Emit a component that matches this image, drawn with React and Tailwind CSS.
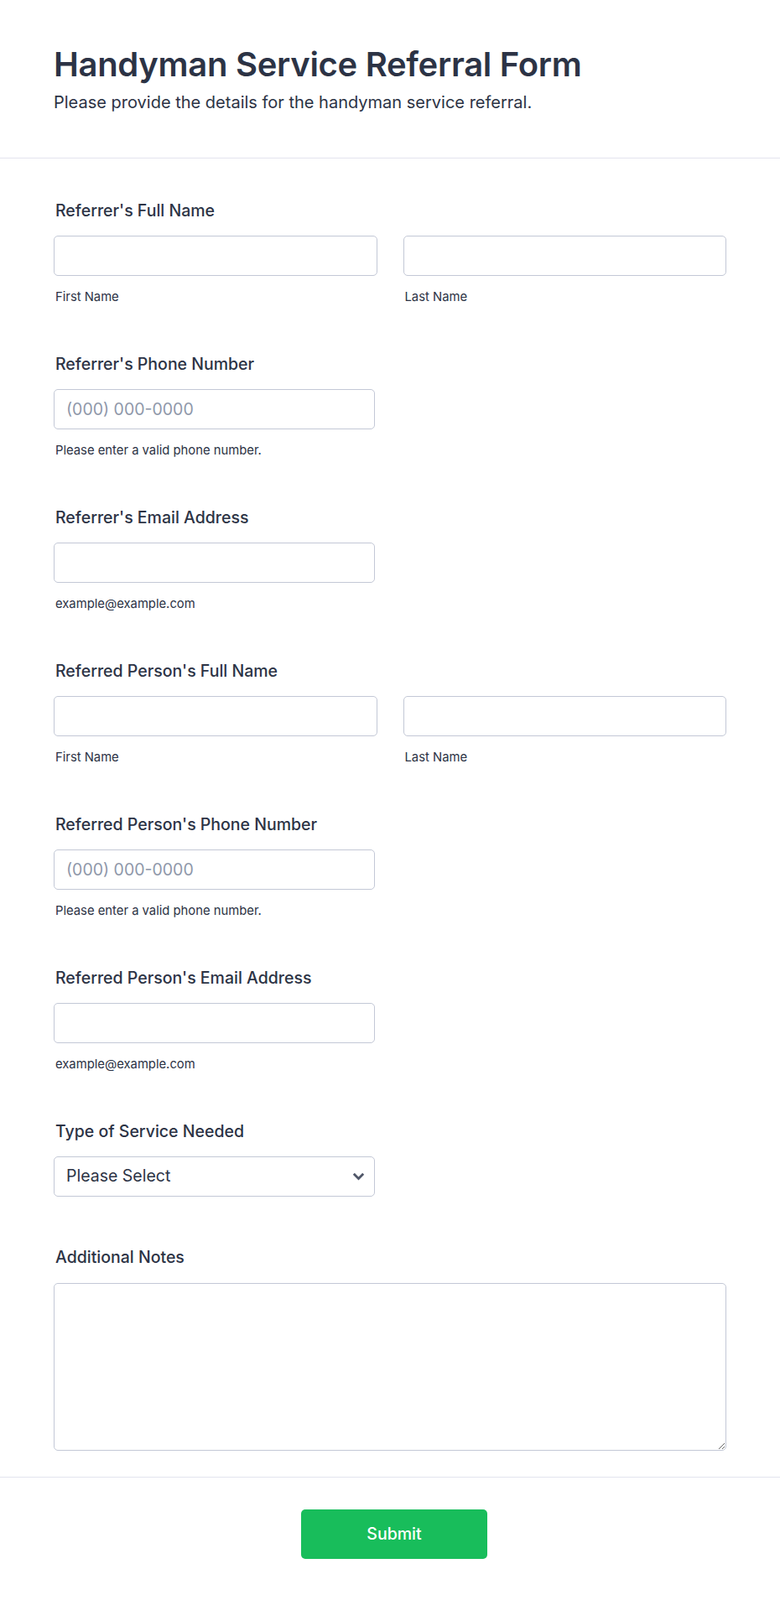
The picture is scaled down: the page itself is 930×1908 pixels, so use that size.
import React from 'react';

const fieldInput =
  'block h-[48px] w-full rounded-[5px] border border-[#c3c8d6] bg-white px-[14px] text-[19.5px] text-[#2c3345] placeholder:text-[#8f98aa] outline-none';

function Label({ children }) {
  return <label className="block pl-[2px] text-[19.5px] leading-[29px] font-medium mb-[15px]">{children}</label>;
}

function Sub({ children }) {
  return <div className="mt-[14px] pl-[2px] text-[14.8px] leading-[22px]">{children}</div>;
}

function NameField({ label }) {
  return (
    <div className="mb-[55px]">
      <Label>{label}</Label>
      <div className="grid grid-cols-2 gap-[31px]">
        <div>
          <input className={fieldInput} />
          <Sub>First Name</Sub>
        </div>
        <div>
          <input className={fieldInput} />
          <Sub>Last Name</Sub>
        </div>
      </div>
    </div>
  );
}

function HalfField({ label, placeholder, sub }) {
  return (
    <div className="mb-[55px]">
      <Label>{label}</Label>
      <div className="w-[383px]">
        <input className={fieldInput} placeholder={placeholder} />
        <Sub>{sub}</Sub>
      </div>
    </div>
  );
}

export default function App() {
  return (
    <div className="min-h-screen bg-white text-[#2c3345] font-['Inter','Noto_Sans',sans-serif]">
      {/* header */}
      <header className="px-[64px] pt-[53px] pb-[51px] border-b border-[#e3e4ee]">
        <h1 className="text-[40px] leading-[48px] font-semibold tracking-[-0.3px]">Handyman Service Referral Form</h1>
        <p className="mt-[7px] text-[20px] leading-[29px]">Please provide the details for the handyman service referral.</p>
      </header>

      {/* fields */}
      <main className="px-[64px] pt-[48px] pb-[31px] border-b border-[#e3e4ee]">
        <NameField label="Referrer's Full Name" />
        <HalfField label="Referrer's Phone Number" placeholder="(000) 000-0000" sub="Please enter a valid phone number." />
        <HalfField label="Referrer's Email Address" sub="example@example.com" />
        <NameField label="Referred Person's Full Name" />
        <HalfField label="Referred Person's Phone Number" placeholder="(000) 000-0000" sub="Please enter a valid phone number." />
        <HalfField label="Referred Person's Email Address" sub="example@example.com" />

        <div className="mb-[58px]">
          <Label>Type of Service Needed</Label>
          <div className="relative w-[383px]">
            <div className={`${fieldInput} flex items-center`}>Please Select</div>
            <svg className="absolute right-[12px] top-[19px]" width="15" height="10" viewBox="0 0 15 10">
              <polyline points="1.8,1.8 7.5,7.5 13.2,1.8" fill="none" stroke="#4f5668" strokeWidth="2.8" />
            </svg>
          </div>
        </div>

        <div>
          <label className="block pl-[2px] text-[19.5px] leading-[29px] font-medium mb-[16px]">Additional Notes</label>
          <textarea className="block h-[200px] w-full rounded-[5px] border border-[#c3c8d6] bg-white outline-none" />
        </div>
      </main>

      {/* submit */}
      <footer className="flex justify-center pl-[10px] pt-[38px] pb-[49px]">
        <button className="h-[59px] w-[222px] rounded-[5px] bg-[#18bd5b] text-[19.5px] font-medium text-white">Submit</button>
      </footer>
    </div>
  );
}
